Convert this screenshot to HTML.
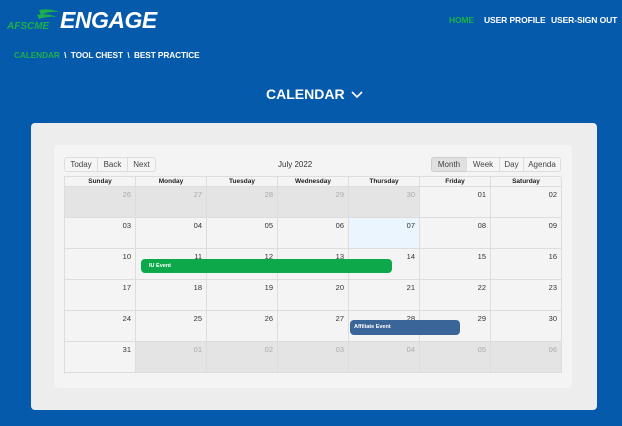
<!DOCTYPE html>
<html><head><meta charset="utf-8"><style>
*{margin:0;padding:0;box-sizing:border-box}
body{width:622px;height:426px;background:#055aab;font-family:"Liberation Sans",sans-serif;position:relative;overflow:hidden}
.a{position:absolute;white-space:nowrap}
.nav{color:#fff;font-weight:bold;font-size:8.5px;letter-spacing:-0.1px}
.outer{left:31px;top:123px;width:566px;height:287px;background:#ededed;border-radius:4px}
.inner{left:54px;top:145px;width:518px;height:243px;background:#f4f4f4;border-radius:4px}
.btn{top:157px;height:15px;border:1px solid #ddd;background:#f5f5f5;font-size:8px;color:#444;text-align:center;line-height:13px}
.grid{left:64px;top:176px;width:497px;height:198px;display:grid;grid-template-columns:repeat(7,71px);grid-template-rows:10px repeat(6,31px);border:1px solid #ddd;border-bottom:none;border-right:none}
.grid div{border-right:1px solid #ddd;border-bottom:1px solid #ddd;font-size:7.5px;color:#333;text-align:right;padding:3px 4px 0 0}
.grid .h{text-align:center;font-weight:bold;font-size:6.5px;padding:1px 0 0;color:#222}
.grid .o{background:#e4e4e4;color:#aaa}
.grid .t{background:#eaf5fd}
.ev{color:#fff;font-size:5.5px;font-weight:bold;border-radius:4px;padding-left:8px;line-height:14px}
</style></head><body>
<div class="a" style="left:5px;top:6px;">
<svg width="60" height="24" viewBox="0 0 60 24"><path d="M34 4 Q44 2 54 6 Q44 5 36 9Z M32 9 Q42 7 52 11 Q42 10 34 13Z" fill="#1cb04a"/><text x="2" y="23" font-family="Liberation Sans" font-style="italic" font-weight="bold" font-size="10" fill="#1cb04a">AFSCME</text></svg>
</div>
<div class="a" style="left:60px;top:7px;color:#fff;font-weight:bold;font-style:italic;font-size:23px;letter-spacing:-0.5px">ENGAGE</div>
<div class="a nav" style="left:449px;top:15px;color:#1cb04a">HOME</div>
<div class="a nav" style="left:484px;top:15px">USER PROFILE</div>
<div class="a nav" style="left:551px;top:15px">USER-SIGN OUT</div>
<div class="a nav" style="left:14px;top:50px;font-size:8.3px"><span style="color:#1cb04a">CALENDAR</span>&nbsp; \ &nbsp;TOOL CHEST &nbsp;\ &nbsp;BEST PRACTICE</div>
<div class="a" style="left:266px;top:86px;color:#fff;font-weight:bold;font-size:14px">CALENDAR <svg width="12" height="8" viewBox="0 0 12 8" style="margin-left:3px"><path d="M1 1 L6 6 L11 1" stroke="#fff" stroke-width="1.6" fill="none"/></svg></div>
<div class="a outer"></div>
<div class="a inner"></div>
<div class="a btn" style="left:64px;width:34px;border-radius:3px 0 0 3px">Today</div>
<div class="a btn" style="left:97px;width:31px">Back</div>
<div class="a btn" style="left:127px;width:29px;border-radius:0 3px 3px 0">Next</div>
<div class="a" style="left:278px;top:160px;font-size:8px;color:#333">July 2022</div>
<div class="a btn" style="left:431px;width:36px;background:#e0e0e0;border-color:#ccc;border-radius:3px 0 0 3px">Month</div>
<div class="a btn" style="left:466px;width:34px">Week</div>
<div class="a btn" style="left:499px;width:25px">Day</div>
<div class="a btn" style="left:523px;width:38px;border-radius:0 3px 3px 0">Agenda</div>
<div class="a grid">
<div class="h">Sunday</div><div class="h">Monday</div><div class="h">Tuesday</div><div class="h">Wednesday</div><div class="h">Thursday</div><div class="h">Friday</div><div class="h">Saturday</div>
<div class="o">26</div><div class="o">27</div><div class="o">28</div><div class="o">29</div><div class="o">30</div><div>01</div><div>02</div>
<div>03</div><div>04</div><div>05</div><div>06</div><div class="t">07</div><div>08</div><div>09</div>
<div>10</div><div>11</div><div>12</div><div>13</div><div>14</div><div>15</div><div>16</div>
<div>17</div><div>18</div><div>19</div><div>20</div><div>21</div><div>22</div><div>23</div>
<div>24</div><div>25</div><div>26</div><div>27</div><div>28</div><div>29</div><div>30</div>
<div>31</div><div class="o">01</div><div class="o">02</div><div class="o">03</div><div class="o">04</div><div class="o">05</div><div class="o">06</div>
</div>
<div class="a ev" style="left:141px;top:259px;width:251px;height:14px;background:#0ca84a">IU Event</div>
<div class="a ev" style="left:350px;top:320px;width:110px;height:15px;background:#3a6598;padding-left:4px">Affiliate Event</div>
</body></html>
